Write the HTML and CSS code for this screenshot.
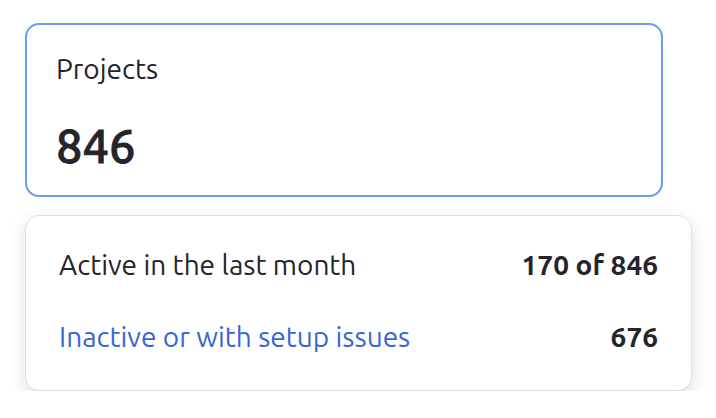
FILE: index.html
```html
<!DOCTYPE html>
<html>
  <head>
    <meta charset="utf-8">
    <title>Projects</title>
    <link rel="stylesheet" href="styles.css">
  </head>
  <body>
    <div class="summary">

      <!-- total count -->
      <div class="stat-card">
        <div class="stat-label">Projects</div>
        <div class="stat-value">846</div>
      </div>

      <!-- breakdown popup -->
      <div class="breakdown">
        <div class="breakdown-row">
          <span class="row-label">Active in the last month</span>
          <span class="row-value">170 of 846</span>
        </div>
        <div class="breakdown-row">
          <a class="row-label row-link" href="#">Inactive or with setup issues</a>
          <span class="row-value">676</span>
        </div>
      </div>

    </div>
  </body>
</html>
```

FILE: styles.css
```css
body {
    margin: 0;
    background-color: white;
    font-family: Ubuntu, "Open Sans", "Noto Sans", sans-serif;
    color: #24242a;
}

.summary {
    padding: 23px 0 0 25px;
}

.stat-card {
    box-sizing: border-box;
    width: 638px;
    height: 174px;
    padding: 27px 30px 0 29px;
    border: 2px solid #6d9cf3;
    border-radius: 14px;
    background-color: white;
}

.stat-label {
    font-size: 28px;
    line-height: 34px;
}

.stat-value {
    margin-top: 32px;
    font-size: 47px;
    font-weight: 500;
    line-height: 56px;
    -webkit-text-stroke: 0.8px currentColor;
}

.breakdown {
    box-sizing: border-box;
    width: 667px;
    height: 176px;
    margin-top: 18px;
    padding: 32px 33px 0 33px;
    border: 1px solid #dfe0e5;
    border-radius: 14px;
    background-color: white;
    box-shadow: 0 6px 18px rgba(0, 0, 0, 0.13);
}

.breakdown-row {
    display: flex;
    justify-content: space-between;
    font-size: 28px;
    line-height: 34px;
}

.breakdown-row + .breakdown-row {
    margin-top: 38px;
}

.row-link {
    color: #3766d3;
    text-decoration: none;
}

.row-value {
    font-weight: 700;
}
```
